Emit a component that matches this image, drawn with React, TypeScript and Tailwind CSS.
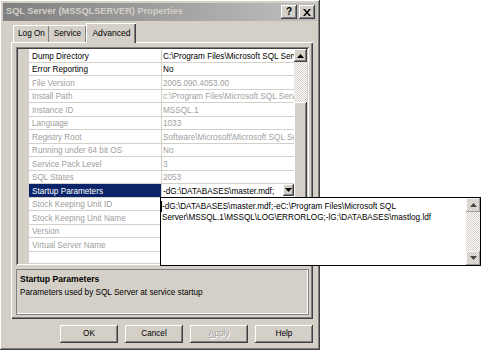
import React from "react";

const raised =
  "shadow-[inset_-1px_-1px_#404040,inset_1px_1px_#ffffff,inset_-2px_-2px_#808080,inset_2px_2px_#d4d0c8]";
const sunken =
  "shadow-[inset_1px_1px_#808080,inset_-1px_-1px_#ffffff,inset_2px_2px_#404040,inset_-2px_-2px_#d4d0c8]";

const rows: { name: string; value: string; enabled?: boolean }[] = [
  { name: "Dump Directory", value: "C:\\Program Files\\Microsoft SQL Server", enabled: true },
  { name: "Error Reporting", value: "No", enabled: true },
  { name: "File Version", value: "2005.090.4053.00" },
  { name: "Install Path", value: "c:\\Program Files\\Microsoft SQL Server" },
  { name: "Instance ID", value: "MSSQL.1" },
  { name: "Language", value: "1033" },
  { name: "Registry Root", value: "Software\\Microsoft\\Microsoft SQL Server" },
  { name: "Running under 64 bit OS", value: "No" },
  { name: "Service Pack Level", value: "3" },
  { name: "SQL States", value: "2053" },
  { name: "Startup Parameters", value: "", enabled: true },
  { name: "Stock Keeping Unit ID", value: "" },
  { name: "Stock Keeping Unit Name", value: "" },
  { name: "Version", value: "" },
  { name: "Virtual Server Name", value: "" },
];

function Arrow({ down }: { down?: boolean }) {
  return (
    <svg width="7" height="4" viewBox="0 0 7 4" className="block">
      {down ? <path d="M0 0h7L3.5 4z" fill="#000" /> : <path d="M0 4h7L3.5 0z" fill="#000" />}
    </svg>
  );
}

function Button({ label, disabled }: { label: string; disabled?: boolean }) {
  return (
    <div className={`flex h-[18px] w-[58px] items-center justify-center bg-[#d4d0c8] pt-[1px] ${raised}`}>
      <span className={disabled ? "text-[#a0a0a0] [text-shadow:1px_1px_#fff]" : "text-black"}>
        {disabled ? (
          <>
            <span className="underline">A</span>pply
          </>
        ) : (
          label
        )}
      </span>
    </div>
  );
}

export default function App() {
  return (
    <div className="relative h-[354px] w-[482px] bg-white font-['Liberation_Sans',Arial,sans-serif] text-[8.2px] leading-none text-black">
      <div className={`flex h-[350px] w-[320px] flex-col bg-[#d4d0c8] p-[3px] ${raised}`}>
        {/* title bar */}
        <div className="flex h-[18px] items-center bg-gradient-to-r from-[#808080] to-[#c0c0c0] pl-[3px] pr-[2px]">
          <span className="text-[9.2px] font-bold text-[#d4d0c8]">SQL Server (MSSQLSERVER) Properties</span>
          <div className="ml-auto flex gap-[2px]">
            <div className={`flex h-[14px] w-[16px] items-center justify-center bg-[#d4d0c8] text-[10px] font-bold ${raised}`}>?</div>
            <div className={`flex h-[14px] w-[16px] items-center justify-center bg-[#d4d0c8] ${raised}`}>
              <svg width="8" height="7" viewBox="0 0 8 7">
                <path d="M0 0h2l2 2.5L6 0h2L5 3.5 8 7H6L4 4.5 2 7H0l3-3.5z" fill="#000" />
              </svg>
            </div>
          </div>
        </div>

        {/* tabs */}
        <div className="mt-[2px] flex h-[19px] items-end pl-[10px]">
          <div className="flex h-[17px] w-[36px] items-center justify-center border-l border-t border-white pt-[1px] shadow-[inset_-1px_0_#808080]">Log On</div>
          <div className="flex h-[17px] w-[37px] items-center justify-center border-t border-white pt-[1px] shadow-[inset_-1px_0_#808080]">Service</div>
          <div className="relative -mb-[1px] flex h-[20px] w-[50px] items-center justify-center border-l border-t border-white bg-[#d4d0c8] text-[8.6px] shadow-[inset_-1px_0_#404040,inset_-2px_0_#808080]">
            Advanced
          </div>
        </div>

        {/* tab panel */}
        <div className="ml-[8px] flex h-[277px] w-[302px] flex-col border-l border-t border-white px-[4px] pt-[4px] shadow-[inset_-1px_-1px_#404040,inset_-2px_-2px_#808080]">
          {/* property grid */}
          <div className={`flex h-[218px] bg-white p-[2px] ${sunken}`}>
            <div className="flex min-w-0 flex-1 flex-col">
              {rows.map((r) => {
                const selected = r.name === "Startup Parameters";
                return (
                  <div key={r.name} className="flex h-[13.5px] shrink-0">
                    <div className="w-[11px] shrink-0 bg-[#d4d0c8]" />
                    <div
                      className={`flex w-[133px] shrink-0 items-center border-b border-r border-[#d4d0c8] pl-[3px] pt-[3px] ${
                        selected ? "bg-[#0a246a] text-white" : r.enabled ? "text-black" : "text-[#a0a0a0]"
                      }`}
                    >
                      {r.name}
                    </div>
                    <div
                      className={`flex min-w-0 flex-1 items-center overflow-hidden whitespace-nowrap border-b border-[#d4d0c8] pl-[1px] ${
                        r.enabled ? "text-black" : "text-[#a0a0a0]"
                      } ${selected ? "" : "pt-[3px]"}`}
                    >
                      {selected ? (
                        <div className="flex w-full items-center">
                          <span className="pt-[3px]">-dG:\DATABASES\master.mdf;</span>
                          <div className={`ml-auto flex h-[12px] w-[11px] items-center justify-center bg-[#d4d0c8] ${raised}`}>
                            <Arrow down />
                          </div>
                        </div>
                      ) : (
                        r.value
                      )}
                    </div>
                  </div>
                );
              })}
              <div className="flex flex-1">
                <div className="w-[11px] bg-[#d4d0c8]" />
              </div>
            </div>
            {/* scrollbar */}
            <div className="flex w-[13px] shrink-0 flex-col bg-[#d4d0c8]">
              <div className={`flex h-[13px] items-center justify-center bg-[#d4d0c8] ${raised}`}>
                <Arrow />
              </div>
              <div className="h-[40px] bg-[repeating-conic-gradient(#ffffff_0%_25%,#d4d0c8_0%_50%)] bg-[length:2px_2px]" />
              <div className={`flex-1 bg-[#d4d0c8] ${raised}`} />
            </div>
          </div>

          {/* description */}
          <div className="mt-[4px] h-[46px] border border-[#808080] px-[3px] pt-[5px] shadow-[inset_-1px_-1px_#ffffff]">
            <div className="text-[8.6px] font-bold">Startup Parameters</div>
            <div className="mt-[5px]">Parameters used by SQL Server at service startup</div>
          </div>
        </div>

        {/* buttons */}
        <div className="mt-[6px] flex justify-end gap-[7px] pr-[4px]">
          <Button label="OK" />
          <Button label="Cancel" />
          <Button label="Apply" disabled />
          <Button label="Help" />
        </div>
      </div>

      {/* dropdown editor */}
      <div className="absolute left-[160px] top-[197px] flex h-[69px] w-[321px] border border-black bg-white">
        <div className="flex-1 whitespace-nowrap pl-[1px] pt-[3px] leading-[11px]">
          <span className="relative">
            <span className="absolute -left-[1px] top-[-1px] h-[11px] w-px bg-black" />
            -dG:\DATABASES\master.mdf;-eC:\Program Files\Microsoft SQL
          </span>
          <br />
          Server\MSSQL.1\MSSQL\LOG\ERRORLOG;-lG:\DATABASES\mastlog.ldf
        </div>
        <div className="flex w-[14px] shrink-0 flex-col bg-[repeating-conic-gradient(#ffffff_0%_25%,#d4d0c8_0%_50%)] bg-[length:2px_2px]">
          <div className="flex h-[14px] items-center justify-center bg-[#d4d0c8] opacity-70 shadow-[inset_-1px_-1px_#808080,inset_1px_1px_#ffffff]">
            <Arrow />
          </div>
          <div className="flex-1" />
          <div className="flex h-[14px] items-center justify-center bg-[#d4d0c8] opacity-70 shadow-[inset_-1px_-1px_#808080,inset_1px_1px_#ffffff]">
            <Arrow down />
          </div>
        </div>
      </div>
    </div>
  );
}
